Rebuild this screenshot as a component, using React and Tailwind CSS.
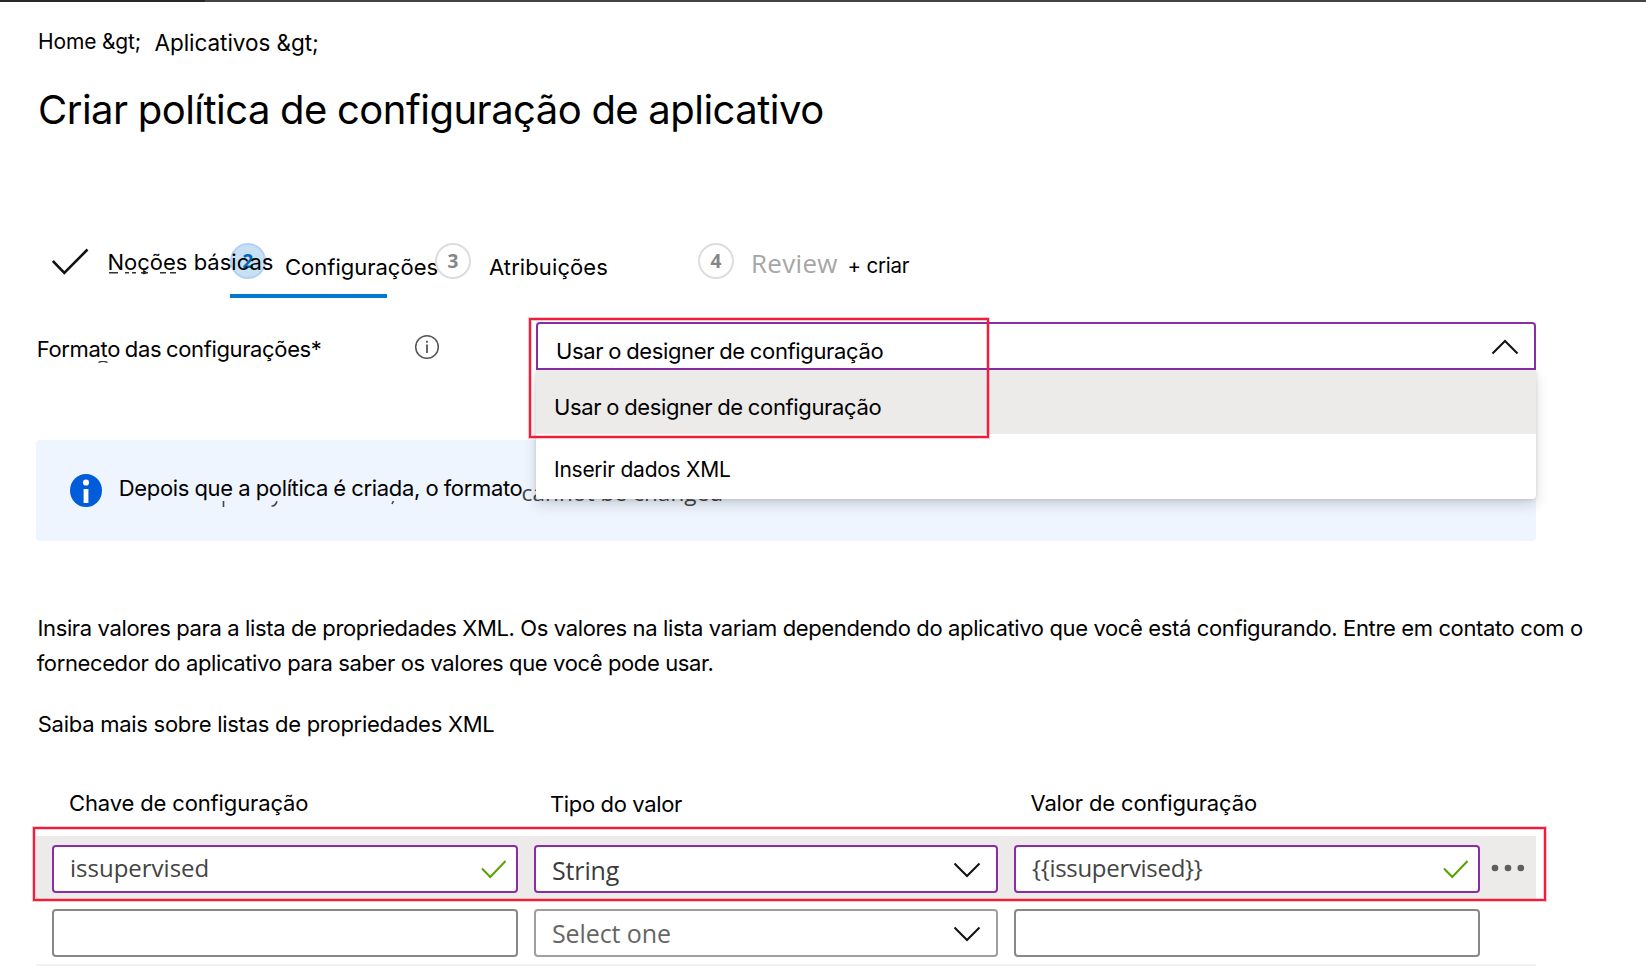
import React from 'react';

function StepCircle({ n, active }) {
  return (
    <span
      className={
        active
          ? 'mt-[3px] flex h-9 w-9 shrink-0 items-center justify-center rounded-full border-2 border-[#b3d0fb] bg-[#c8e1f2] font-["Open_Sans",sans-serif] text-[19px] font-bold text-[#0067b8]'
          : 'mt-[3px] flex h-9 w-9 shrink-0 items-center justify-center rounded-full border-2 border-[#dddddd] bg-white font-["Open_Sans",sans-serif] text-[19px] font-bold text-[#868686]'
      }
    >
      {n}
    </span>
  );
}

function ValidIcon() {
  return (
    <svg className="mt-3 h-[20px] w-[26px]" viewBox="0 0 26 20" fill="none" stroke="#57a300" strokeWidth="2">
      <path d="M1 9.5 L9.3 18 L24.5 2" />
    </svg>
  );
}

function Chevron({ up }) {
  return (
    <svg className="h-[16px] w-[28px]" viewBox="0 0 28 16" fill="none" stroke="#111111" strokeWidth="2">
      <path d={up ? 'M1.5 14.5 L14 2 L26.5 14.5' : 'M1.5 1.5 L14 14 L26.5 1.5'} />
    </svg>
  );
}

export default function App() {
  return (
    <div className="relative flex h-[968px] w-[1646px] flex-col overflow-hidden bg-white font-[Inter,sans-serif] text-[22px] leading-[28px] whitespace-nowrap text-black">
      <div className="flex h-[2px] shrink-0 bg-[#444343]">
        <div className="w-[205px] bg-[#292727]" />
      </div>

      <nav className="flex h-[84px] shrink-0 pt-[26px] pl-[38px]">
        <span className="w-[116.5px] text-[21px] tracking-[-0.15px]">Home &amp;gt;</span>
        <span className="pt-px text-[22.5px] tracking-[-0.05px]">Aplicativos &amp;gt;</span>
      </nav>

      <h1 className="h-[154px] shrink-0 pl-[38px] text-[40px] leading-[48px] tracking-[-0.51px] [word-spacing:-0.6px]">
        Criar política de configuração de aplicativo
      </h1>

      <div className="flex h-[58px] shrink-0 pl-[52px]">
        <div className="relative z-10 flex w-[178px]">
          <svg className="mt-[8px] h-[28px] w-[37px] shrink-0" viewBox="0 0 37 28" fill="none" stroke="#111111" strokeWidth="2.6">
            <path d="M0.8 13 L12.3 25 L35.5 1.5" />
          </svg>
          <span className="ml-[18.5px] pt-[8px]">Noções básicas</span>
          <svg className="absolute top-[31.5px] left-[55px] h-[2px] w-[72px]" viewBox="0 0 72 2" fill="none" stroke="#333333" strokeWidth="1.6">
            <path d="M2 .8H11M18 .8H22M25 .8H29M34 .8H41M53 .8H59M63 .8H69" />
          </svg>
        </div>
        <div className="flex w-[205px]">
          <div className="flex h-[58px] w-[157px] border-b-4 border-[#0078d4]">
            <StepCircle n="2" active />
            <span className="ml-[19px] pt-[13px]">Configurações</span>
          </div>
        </div>
        <div className="flex w-[263px]">
          <StepCircle n="3" />
          <span className="ml-[18px] pt-[13px] tracking-[0.1px]">Atribuições</span>
        </div>
        <div className="flex">
          <StepCircle n="4" />
          <span className='ml-[17px] w-[96.5px] pt-[9px] font-["Open_Sans",sans-serif] text-[26px] tracking-[0.3px] text-[#a6a6a6]'>
            Review
          </span>
          <span className="pt-[12px] text-[20.5px] tracking-[-0.2px]">+ criar</span>
        </div>
      </div>

      <div className="flex h-[142px] shrink-0 pt-[24px] pl-[36px]">
        <div className="relative flex w-[500px]">
          <span className="w-[378px] pt-[13px] pl-[0.75px] tracking-[-0.36px] [word-spacing:-1px]">Formato das configurações*</span>
          <svg className="mt-[12px] h-[26px] w-[26px]" viewBox="0 0 26 26" fill="none" stroke="#555555" strokeWidth="1.5">
            <circle cx="13" cy="13" r="11.3" />
            <path d="M13 10.5V19M13 6.8V8.8" strokeWidth="1.8" />
          </svg>
          <svg className="absolute top-[39px] left-[62px] h-[2px] w-[10px]" viewBox="0 0 10 2" fill="none" stroke="#333333" strokeWidth="1.3">
            <path d="M0.5 1.5Q5 -0.6 9.5 1.5" />
          </svg>
        </div>
        <div className="relative z-20 w-[1000px]">
          <div className="flex h-12 justify-between rounded-t-[4px] border-2 border-[#8a2da5] bg-white pt-[13px] pr-[15px] pl-[18px]">
            <span className="tracking-[-0.35px] [word-spacing:-0.8px]">Usar o designer de configuração</span>
            <span className="pt-[2px]">
              <Chevron up />
            </span>
          </div>
          <div className="absolute top-12 left-0 w-full overflow-hidden rounded-b-[4px] bg-white shadow-[0_6px_14px_rgba(0,0,0,0.14),0_1px_4px_rgba(0,0,0,0.12)]">
            <div className="h-16 bg-[#ecebe9] pt-[22.5px] pl-[18px] tracking-[-0.35px] [word-spacing:-0.8px]">
              Usar o designer de configuração
            </div>
            <div className="h-[65px] pt-[21.5px] pl-[18px] text-[21px] tracking-[-0.25px]">Inserir dados XML</div>
          </div>
          <div className="absolute -top-[4px] -left-[7px] h-[120px] w-[460px] border-2 border-[#f01e3a] shadow-[0_0_0_1px_rgba(240,30,58,0.25),inset_0_0_0_1px_rgba(240,30,58,0.25)]" />
        </div>
      </div>

      <div className="relative ml-[36px] flex h-[101px] w-[1500px] shrink-0 rounded-[4px] bg-[#eef5ff] pt-[34px] pl-[34px]">
        <svg className="h-[33px] w-[32px]" viewBox="0 0 32 33">
          <ellipse cx="16" cy="16.5" rx="16" ry="16.5" fill="#015cda" />
          <circle cx="16" cy="8.5" r="3.1" fill="#ffffff" />
          <rect x="13.6" y="15" width="4.8" height="14" fill="#ffffff" />
        </svg>
        <span className="w-[419.5px] pl-[16.75px] tracking-[-0.34px] [word-spacing:-0.4px]">
          Depois que a política é criada, o formato
        </span>
        <span className='pt-[5px] font-["Open_Sans",sans-serif] text-[22.5px] tracking-[0.1px] text-[#444444]'>cannot be changed</span>
        <svg className="absolute top-[61px] left-[184px] h-[7px] w-[180px]" viewBox="0 0 180 7" fill="none" stroke="#444444" strokeWidth="1.6">
          <path d="M3.5 0V6M57 0.3C56 3.5 54.5 5.3 51.5 5M173.5 0L172 3" />
        </svg>
      </div>

      <p className="mt-[70px] h-[99px] shrink-0 leading-[35px]">
        <span className="pl-[37.5px] tracking-[-0.37px]">
          Insira valores para a lista de propriedades XML. Os valores na lista variam dependendo do aplicativo que você está configurando. Entre em contato com o
        </span>
        <br />
        <span className="pl-[36.75px] tracking-[-0.38px]">fornecedor do aplicativo para saber os valores que você pode usar.</span>
      </p>
      <p className="h-[79px] shrink-0 pl-[37.75px] tracking-[-0.27px]">Saiba mais sobre listas de propriedades XML</p>

      <div className="flex h-[47px] shrink-0 pl-[69px]">
        <span className="w-[481px] tracking-[-0.14px]">Chave de configuração</span>
        <span className="w-[480.5px] pt-px tracking-[-0.36px]">Tipo do valor</span>
        <span className="tracking-[-0.15px]">Valor de configuração</span>
      </div>

      <div className='relative ml-[36px] flex h-[65px] w-[1500px] shrink-0 gap-4 pl-4 font-["Open_Sans",sans-serif] text-[24px] text-[#444444]'>
        <div className="absolute top-0 left-0 h-[64px] w-full bg-[#ecebe9]" />
        <div className="relative mt-[9px] flex h-12 w-[466px] justify-between rounded-[4px] border-2 border-[#8a2da5] bg-white pt-[7px] pr-[9px] pl-[16px]">
          <span>issupervised</span>
          <span className="-mt-[7px] flex">
            <ValidIcon />
          </span>
        </div>
        <div className="relative mt-[9px] flex h-12 w-[464px] justify-between rounded-[4px] border-2 border-[#8a2da5] bg-white pt-[9px] pr-[15px] pl-[16px] text-[25px] tracking-[-0.15px] text-[#3b3b3b]">
          <span>String</span>
          <span className="flex pt-[6px]">
            <Chevron />
          </span>
        </div>
        <div className="relative mt-[9px] flex h-12 w-[466px] justify-between rounded-[4px] border-2 border-[#8a2da5] bg-white pt-[7px] pr-[9px] pl-[16px]">
          <span className="tracking-[-0.3px]">{'{{issupervised}}'}</span>
          <span className="-mt-[7px] flex">
            <ValidIcon />
          </span>
        </div>
        <svg className="relative -ml-[5px] mt-[28px] h-[8px] w-[34px]" viewBox="0 0 34 8" fill="#605e5c">
          <circle cx="4" cy="4" r="3.3" />
          <circle cx="17" cy="4" r="3.3" />
          <circle cx="29.8" cy="4" r="3.3" />
        </svg>
        <div className="absolute -top-[9px] -left-[3px] h-[74px] w-[1513px] border-2 border-[#f01e3a] shadow-[0_0_0_1px_rgba(240,30,58,0.25),inset_0_0_0_1px_rgba(240,30,58,0.25)]" />
      </div>

      <div className='ml-[36px] flex h-[65px] w-[1500px] shrink-0 gap-4 border-b-2 border-[#f1f1f1] pt-[8px] pl-4 font-["Open_Sans",sans-serif]'>
        <div className="h-12 w-[466px] rounded-[4px] border-2 border-[#8a8886]" />
        <div className="flex h-12 w-[464px] justify-between rounded-[4px] border-2 border-[#a19f9d] pt-[8px] pr-[15px] pl-[16px] text-[25px] tracking-[-0.1px] text-[#666666]">
          <span>Select one</span>
          <span className="flex pt-[7px]">
            <Chevron />
          </span>
        </div>
        <div className="h-12 w-[466px] rounded-[4px] border-2 border-[#8a8886]" />
      </div>
    </div>
  );
}
